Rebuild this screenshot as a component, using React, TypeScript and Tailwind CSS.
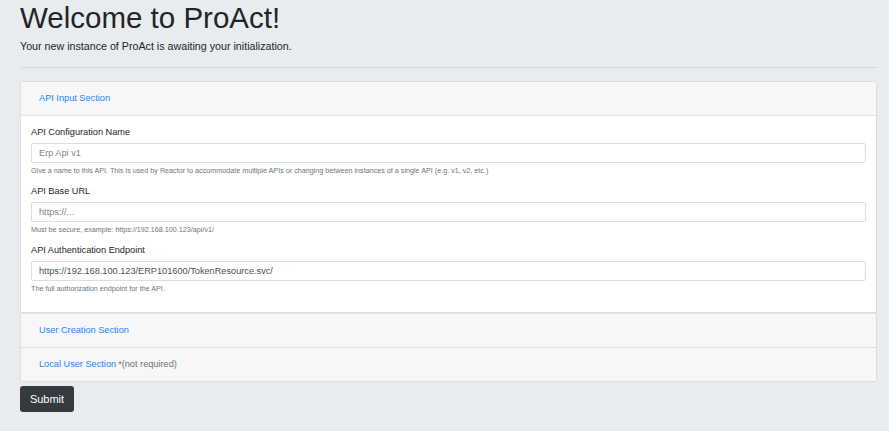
import { useState } from "react";

type Field = {
  id: string;
  label: string;
  placeholder: string;
  value?: string;
  help: string;
};

const FIELDS: Field[] = [
  {
    id: "configName",
    label: "API Configuration Name",
    placeholder: "Erp Api v1",
    help: "Give a name to this API. This is used by Reactor to accommodate multiple APIs or changing between instances of a single API (e.g. v1, v2, etc.)",
  },
  {
    id: "baseUrl",
    label: "API Base URL",
    placeholder: "https://...",
    help: "Must be secure, example: https://192.168.100.123/api/v1/",
  },
  {
    id: "authEndpoint",
    label: "API Authentication Endpoint",
    placeholder: "",
    value: "https://192.168.100.123/ERP101600/TokenResource.svc/",
    help: "The full authorization endpoint for the API.",
  },
];

function FormGroup({ field }: { field: Field }) {
  const [value, setValue] = useState(field.value ?? "");

  return (
    <div className="mb-[9px]">
      <label htmlFor={field.id} className="mb-[4px] block text-[9.2px] leading-[13px] text-[#212529]">
        {field.label}
      </label>
      <input
        id={field.id}
        value={value}
        onChange={(e) => setValue(e.target.value)}
        placeholder={field.placeholder}
        className="block h-[20px] w-full rounded-[2px] border border-[#dcdfe2] bg-white px-[7px] text-[9.2px] text-[#495057] outline-none placeholder:text-[#7d848a]"
      />
      <small className="mt-[2px] block text-[7.2px] leading-[11px] text-[#6c757d]">{field.help}</small>
    </div>
  );
}

function SectionHeader({ title, note }: { title: string; note?: string }) {
  return (
    <div className="flex h-[33px] items-center bg-[#f7f7f7] pl-[18px] text-[9.2px]">
      <button type="button" className="cursor-pointer text-[#1a85ff] hover:underline">
        {title}
      </button>
      {note && <span className="ml-[2px] text-[#6c757d]">{note}</span>}
    </div>
  );
}

export default function App() {
  return (
    <div
      className="min-h-[431px] bg-[#e9ecef] text-[#212529]"
      style={{ fontFamily: '"Liberation Sans", Arial, sans-serif' }}
    >
      <div className="pl-[20px] pr-[12px]">
        <h1 className="text-[29.5px] font-light leading-[36px]">Welcome to ProAct!</h1>
        <p className="mt-[2px] text-[10.7px] leading-[16px]">
          Your new instance of ProAct is awaiting your initialization.
        </p>
        <hr className="mt-[13px] border-t border-[#d8dbde]" />

        <div className="mt-[13px]">
          <div className="overflow-hidden rounded-t-[3px] border border-[#dcdee0] bg-white">
            <SectionHeader title="API Input Section" />
            <div className="border-t border-[#e2e2e2] px-[10px] pb-[9px] pt-[10px]">
              {FIELDS.map((f) => (
                <FormGroup key={f.id} field={f} />
              ))}
            </div>
          </div>
          <div className="border-x border-b border-t border-[#dcdee0] border-t-[#e1e2e3] bg-[#f7f7f7]">
            <SectionHeader title="User Creation Section" />
          </div>
          <div className="rounded-b-[3px] border-x border-b border-[#dcdee0] bg-[#f7f7f7]">
            <SectionHeader title="Local User Section" note="*(not required)" />
          </div>
        </div>

        <button
          type="submit"
          className="mt-[4px] h-[26px] w-[54px] rounded-[3px] bg-[#343a40] text-[11px] text-white"
        >
          Submit
        </button>
      </div>
    </div>
  );
}
